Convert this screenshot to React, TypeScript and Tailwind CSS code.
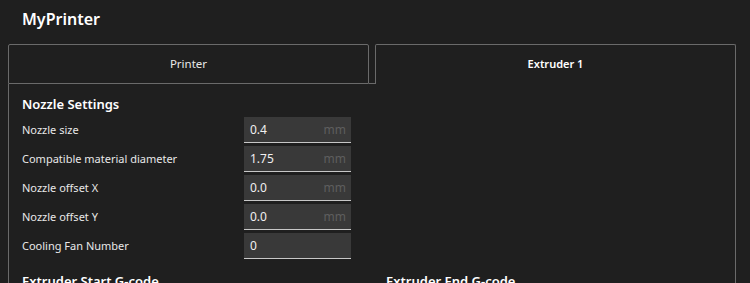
import * as React from 'react';

interface FieldProps {
  label: string
  value: string
  unit?: string
}

function Field(props: FieldProps) {
    return (
        <div className="flex items-center h-[26px]">
            <span className="w-[222px] text-[11px] text-[#e8e8e8]">{props.label}</span>
            <div className="flex items-center w-[107px] h-[26px] bg-[#393939] border-b border-[#c8c8c8] pl-[6px] pr-[5px]">
                <span className="text-[12px] text-[#f0f0f0]">{props.value}</span>
                <span className="flex-1"></span>
                <span className="text-[12px] text-[#5e5e5e]">{props.unit}</span>
            </div>
        </div>
    );
}

export default function App() {
    return (
        <div className="w-[750px] h-[283px] overflow-hidden bg-[#1f1f1f] font-['Noto_Sans',sans-serif]">
            <div className="h-[44px] pl-[22px] pt-[6px]">
                <h1 className="text-[16px] font-semibold text-white leading-[26px]">MyPrinter</h1>
            </div>
            <div className="ml-[8px] mr-[14px]">
                <div className="flex">
                    <div className="w-[361px] h-[40px] border border-[#6a6a6a] rounded-t-[2px] flex items-center justify-center text-[11.5px] text-[#e8e8e8]">
                        Printer
                    </div>
                    <div className="w-[6px] h-[40px] border-b border-[#6a6a6a]"></div>
                    <div className="w-[361px] h-[40px] border border-b-0 border-[#6a6a6a] rounded-t-[2px] flex items-center justify-center text-[11px] font-semibold text-white">
                        Extruder 1
                    </div>
                </div>
                <div className="h-[200px] border-x border-[#6a6a6a] pl-[13px] pt-[10px]">
                    <div className="flex">
                        <div className="w-[364px]">
                            <h2 className="text-[13px] font-semibold text-white leading-[20px] mb-[3px]">Nozzle Settings</h2>
                            <div className="flex flex-col gap-[3px]">
                                <Field label="Nozzle size" value="0.4" unit="mm" />
                                <Field label="Compatible material diameter" value="1.75" unit="mm" />
                                <Field label="Nozzle offset X" value="0.0" unit="mm" />
                                <Field label="Nozzle offset Y" value="0.0" unit="mm" />
                                <Field label="Cooling Fan Number" value="0" />
                            </div>
                            <h2 className="mt-[12px] text-[13px] font-semibold text-white leading-[20px]">Extruder Start G-code</h2>
                        </div>
                        <div className="flex flex-col justify-end">
                            <h2 className="text-[13px] font-semibold text-white leading-[20px]">Extruder End G-code</h2>
                        </div>
                    </div>
                </div>
            </div>
        </div>
    );
}
